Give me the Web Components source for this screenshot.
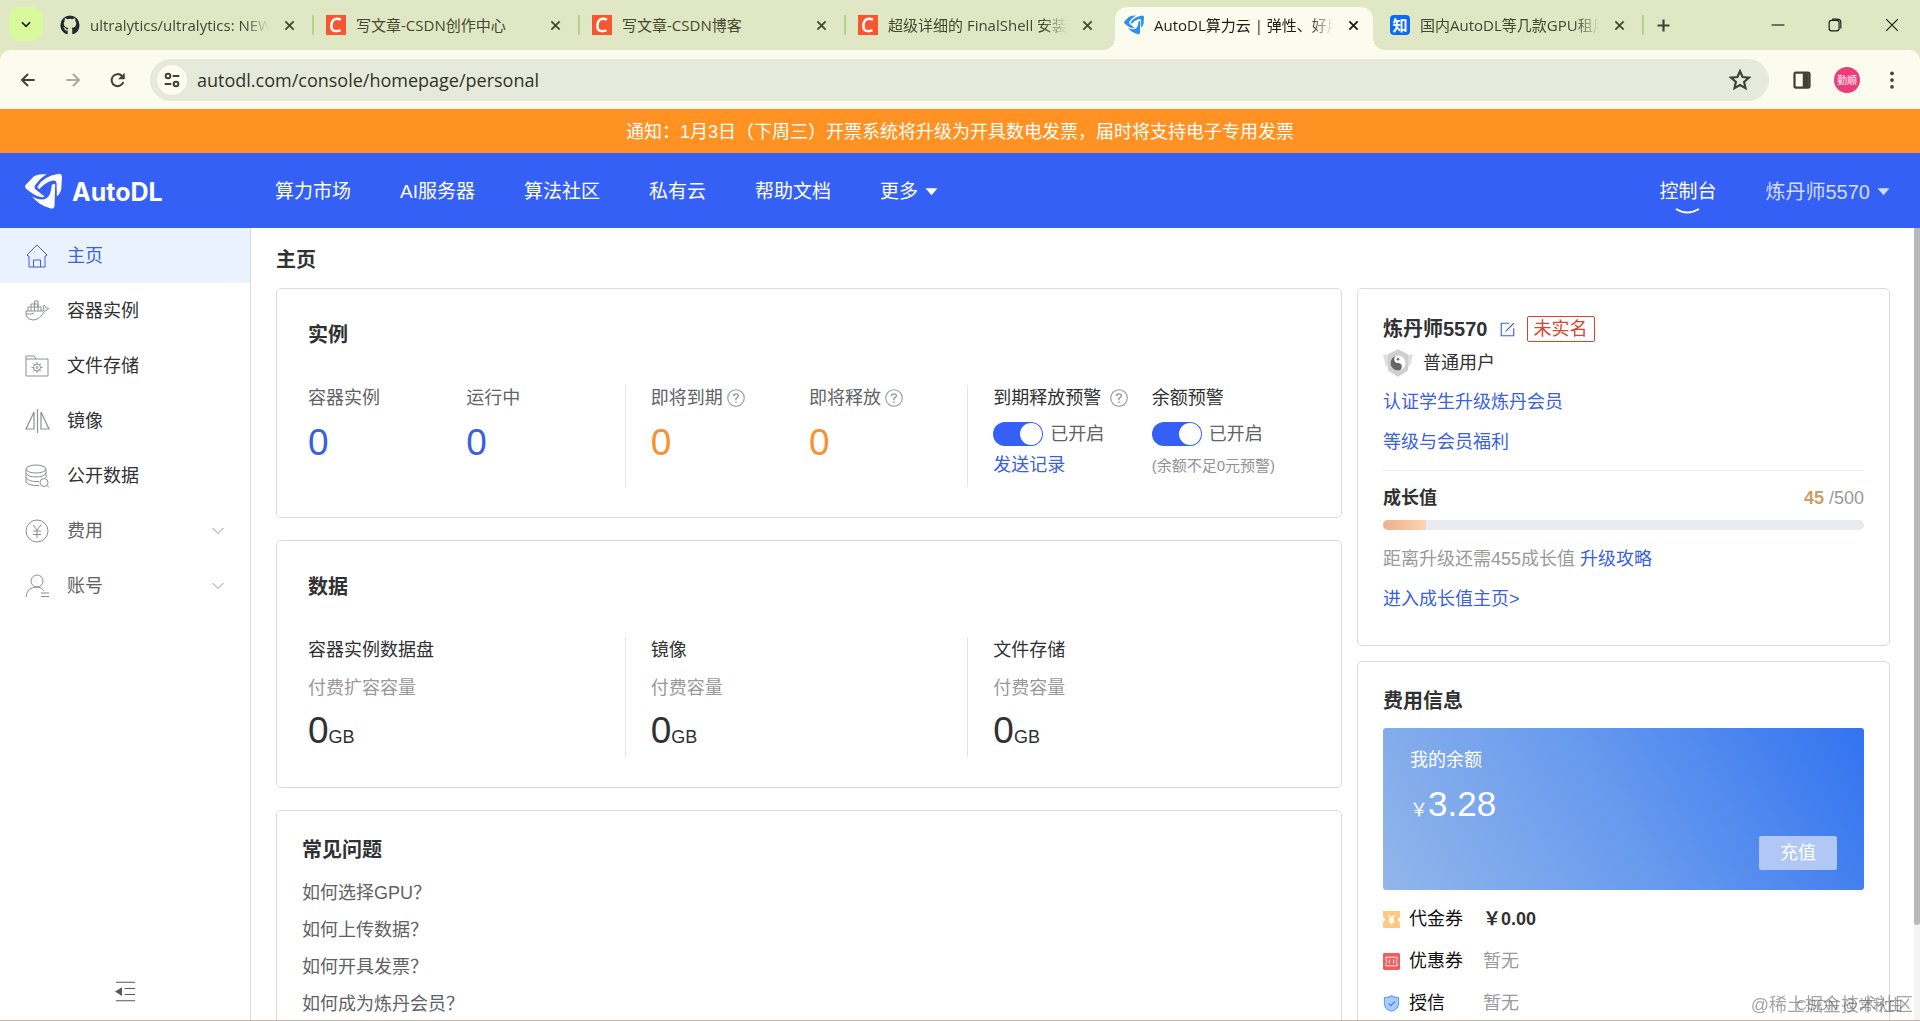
<!DOCTYPE html>
<html lang="zh-CN">
<head>
<meta charset="utf-8">
<title>AutoDL算力云 | 弹性、好用</title>
<style>
  body {
    margin: 0;
    font-family: "Liberation Sans", "Noto Sans CJK SC", sans-serif;
    font-size: 18px;
    line-height: 24px;
    color: #303133;
    background: #fff;
  }
</style>
</head>
<body>
<console-app></console-app>

<script>
const ICONS = {
  chevron: `<path d="M5 9l7 7 7-7" fill="none" stroke="currentColor" stroke-width="3"/>`,
  thinChevron: `<path d="M1 6l11 11 11-11" fill="none" stroke="currentColor" stroke-width="2"/>`,
  caret: `<path d="M1 6h22L12 19z" fill="currentColor"/>`,
  close: `<path d="M3 3l18 18M21 3L3 21" fill="none" stroke="currentColor" stroke-width="4"/>`,
  thinClose: `<path d="M2 2l20 20M22 2L2 22" fill="none" stroke="currentColor" stroke-width="2"/>`,
  plus: `<path d="M12 1v22M1 12h22" fill="none" stroke="currentColor" stroke-width="4"/>`,
  minus: `<path d="M1 12h22" fill="none" stroke="currentColor" stroke-width="2"/>`,
  restore: `<g fill="none" stroke="currentColor" stroke-width="2"><rect x="2" y="4" width="17" height="18" rx="4"/><path d="M7 2h9q6 0 6 6v10"/></g>`,
  back: `<path d="M22 12H4M12 3l-9 9 9 9" fill="none" stroke="currentColor" stroke-width="3"/>`,
  forward: `<path d="M2 12h18M12 3l9 9-9 9" fill="none" stroke="currentColor" stroke-width="3"/>`,
  reload: `<path d="M20 15a9 9 0 1 1-2-9l3 3" fill="none" stroke="currentColor" stroke-width="3"/><path d="M22 1v10H12z" fill="currentColor"/>`,
  tune: `<g fill="none" stroke="currentColor" stroke-width="3"><circle cx="6" cy="6" r="3.5"/><path d="M13 6h10M1 18h10"/><circle cx="18" cy="18" r="3.5"/></g>`,
  star: `<path d="M12 2.500l2.800 6.300 6.900.7-5.200 4.600 1.500 6.800-6-3.500-6 3.500 1.500-6.800-5.200-4.600 6.900-.7z" fill="none" stroke="currentColor" stroke-width="2.400"/>`,
  panel: `<rect x="2" y="2" width="20" height="20" rx="2" fill="none" stroke="currentColor" stroke-width="3"/><path d="M13 2h8v20h-8z" fill="currentColor"/>`,
  dots: `<g fill="currentColor"><circle cx="12" cy="3" r="2.500"/><circle cx="12" cy="12" r="2.500"/><circle cx="12" cy="21" r="2.500"/></g>`,
  github: `<path fill="#24292f" d="M12 .5A11.500 11.500 0 0 0 .5 12.200c0 5 3.300 9.400 7.900 11 .6.100.8-.3.800-.6v-4c-2.800.6-3.500-1-3.800-1.900-.3-.7-1-1.600-1.600-1.900 1.800-.6 2.600.9 3 1.500.9 1.300 2 1.200 2.600.9.100-.7.400-1.200.7-1.500-2.800-.3-5.500-1.300-5.500-5.700 0-1.300.4-2.300 1.200-3.100-.1-.3-.5-1.500.1-3.100 0 0 1-.3 3.200 1.200a11 11 0 0 1 5.800 0c2.200-1.500 3.200-1.200 3.200-1.200.6 1.600.2 2.800.1 3.100.7.800 1.200 1.800 1.200 3.100 0 4.400-2.700 5.400-5.500 5.700.5.400.8 1.100.8 2.200v4.700c0 .3.200.7.800.6a11.700 11.700 0 0 0 7.900-11A11.500 11.500 0 0 0 12 .5z"/>`,
  csdn: `<path d="M0 0h24v24H0z" fill="#f9552f"/><path d="M18 5.500Q7.500 2 6.500 12T17.500 18.500" fill="none" stroke="#fff" stroke-width="3"/>`,
  blades: `<g transform="translate(0 .5) scale(.22)" fill="currentColor"><path d="M64 1Q40 1 26 8L3 32Q-3 38 4 45L24 60Q42 72 58 68L30 45Q25 38 32 31Q44 14 64 1z"/><path d="M100 0Q109 0 109 10L107 44Q104 60 94 66L93 27Q91 18 82 20Q58 26 42 46L36 39Q52 8 100 0z"/><path d="M21 67Q46 82 64 72Q76 64 79 33Q85 28 89 31L87 96Q85 106 74 102Q40 92 21 67z"/></g>`,
  home: `<path d="M2 11L12 1l10 10-1 1h-1v11H4V12H3zM8.500 23v-7h7v7" fill="none" stroke="currentColor"/>`,
  docker: `<g fill="none" stroke="currentColor"><path d="M1 12h17q1-1 .5-3-.8-2 .5-3 1.500 1 2 3 1.500-.3 2.500.5-1 2-4 2.500Q15 21 8 21 0 20 1 12zM3 12V8h13v4M6 12V5h7v7M9.500 12V2H13v6M1 15h5l3-1"/></g>`,
  folder: `<g fill="none" stroke="currentColor"><path d="M1 22V2h8l2 3h12v17zM1 5h10"/><circle cx="12" cy="13.500" r="3.500"/><circle cx="12" cy="13.500" r="1"/><path d="M12 8v2M12 17v2M6.500 13.500h2M15.500 13.500h2M8 9.500l1.500 1.500M14.500 16l1.500 1.500M16 9.500L14.500 11M9.500 16L8 17.500"/></g>`,
  mirror: `<path d="M12.500 0v24M9 3v17H1zM16 3v17h8z" fill="none" stroke="currentColor" stroke-width="1.200"/>`,
  database: `<g fill="none" stroke="currentColor"><ellipse cx="11" cy="5" rx="10" ry="4"/><path d="M1 5v13q3 4 13 3.500M21 5v9M1 9q2 4 10 4t10-4M1 13.500q2 4 10 4h3"/><circle cx="19" cy="18.500" r="4"/><path d="M22 21.500l2 2"/></g>`,
  yen: `<g fill="none" stroke="currentColor"><circle cx="12" cy="12" r="11"/><path d="M8 6l4 5 4-5M12 11v8M8 12h8M8 15.500h8"/></g>`,
  account: `<g fill="none" stroke="currentColor"><circle cx="12" cy="7" r="6"/><path d="M1 23Q2 13 12 13q5 0 7 4M16 19h8M16 22.500h8"/></g>`,
  collapse: `<path d="M1 1.500h22M11 8.500h12M11 15.500h12M1 22.500h22" fill="none" stroke="currentColor" stroke-width="1.200"/><path d="M0 12l8-5v10z" fill="currentColor"/>`,
  help: `<g fill="none" stroke="currentColor"><circle cx="12" cy="12" r="11" stroke-width="1.400"/><path d="M8.800 9.500Q9 6.500 12 6.500t3.200 2.800Q15.200 11 12 12.500V15M12 16.500v2" stroke-width="1.800"/></g>`,
  edit: `<path d="M15 2H2v20h20V10M9 15L22 2" fill="none" stroke="currentColor" stroke-width="1.800"/>`,
  badge: `<path d="M0 5l7 1v13L2 13zM24 5l-7 1v13l5-6z" fill="#dedede"/><path d="M12 1l8 4v13l-8 5-8-5V5z" fill="#cfcfcf"/><circle cx="12" cy="12" r="6" fill="#fff"/><path d="M12 6a6 6 0 0 0 0 12 3 3 0 0 0 0-6 3 3 0 0 1 0-6z" fill="#666"/><circle cx="12" cy="9" r="1" fill="#666"/>`,
  voucher: `<path d="M0 0h24v9a3 3 0 0 0 0 6v9H0v-9a3 3 0 0 0 0-6z" fill="#ffc97f"/><path d="M8 6l4 5 4-5M12 11v8M8 12h8M8 15h8" fill="none" stroke="#fff" stroke-width="2.200"/>`,
  coupon: `<rect width="24" height="24" rx="2" fill="#f65c5e"/><path d="M4 6h16v3q-3 3 0 6v3H4v-3q3-3 0-6zM9 9v6M15 9v6" fill="none" stroke="#fff" stroke-width="1.300"/>`,
  shield: `<path d="M12 1q5 3 10 3v9q-1 7-10 10Q3 20 2 13V4q5 0 10-3z" fill="#a9cdfb" stroke="#5b9bf3" stroke-width="1.500"/><path d="M8 12l3 3 6-6" fill="none" stroke="#3d7ff0" stroke-width="1.500"/>`,
};

const LINK_STYLE = `
  a { color: #3a5fe0; text-decoration: none; }
  button { font: inherit; color: inherit; border: none; background: none; padding: 0; }
`;

// Shared base: renders the markup returned by render() into an open root
class BaseElement extends HTMLElement {
  connectedCallback() {
    if (this.shadowRoot) return;
    this.attachShadow({ mode: "open" });
    this.shadowRoot.innerHTML = `<style>${LINK_STYLE}</style>` + this.render();
  }
  attr(name) {
    return this.getAttribute(name) || "";
  }
}

class UiIcon extends BaseElement {
  render() {
    return /* HTML */ `
      <style>
        :host {
          display: block;
          flex: none;
          width: var(--icon-size, 20px);
          height: var(--icon-size, 20px);
        }
        svg { display: block; width: 100%; height: 100%; overflow: visible; }
      </style>
      <svg viewBox="0 0 24 24" aria-hidden="true">${ICONS[this.attr("name")]}</svg>
    `;
  }
}

class BrowserTab extends BaseElement {
  render() {
    return /* HTML */ `
      <style>
        :host {
          display: block;
          flex: 0 1 266px;
          min-width: 0;
          box-sizing: border-box;
          padding: 0 4px;
          color: #43492f;
        }
        .tab {
          display: flex;
          align-items: center;
          height: 36px;
          padding: 0 9px 7px;
          position: relative;
        }
        :host([active]) { color: #1b1c15; }
        :host([active]) .tab { background: #fbfbee; border-radius: 12px 12px 0 0; }
        :host([active]) .tab::before,
        :host([active]) .tab::after {
          content: "";
          position: absolute;
          bottom: 0;
          width: 12px;
          height: 12px;
        }
        :host([active]) .tab::before {
          right: 100%;
          background: radial-gradient(circle at 0 0, transparent 12px, #fbfbee 12px);
        }
        :host([active]) .tab::after {
          left: 100%;
          background: radial-gradient(circle at 100% 0, transparent 12px, #fbfbee 12px);
        }
        .title {
          flex: 1;
          min-width: 0;
          margin: 0 15px 0 10px;
          overflow: hidden;
          white-space: nowrap;
        }
        :host([fade]) .title { -webkit-mask-image: linear-gradient(to left, transparent, #000 24px); }
        button { --icon-size: 11px; margin-right: 5px; }
        .line { position: absolute; right: -5px; top: 8px; width: 2px; height: 20px; background: #b9d48a; }
        :host(:not([line])) .line { display: none; }
        ui-icon[name="blades"] { color: #2a8ff0; }
        .zhi {
          width: 20px;
          height: 20px;
          border-radius: 4px;
          background: #0a6cf5;
          color: #fff;
          font-weight: bold;
          line-height: 20px;
          text-align: center;
        }
      </style>
      <div class="tab">
        ${this.attr("icon") === "zhihu"
          ? `<span class="zhi">知</span>`
          : `<ui-icon name="${this.attr("icon")}"></ui-icon>`}
        <span class="title"><slot></slot></span>
        <button aria-label="关闭"><ui-icon name="close"></ui-icon></button>
        <span class="line"></span>
      </div>
    `;
  }
}

class BrowserBar extends BaseElement {
  render() {
    return /* HTML */ `
      <style>
        :host {
          display: block;
          background: #dfe7c5;
          color: #3f4432;
          font-family: "Open Sans", "Noto Sans CJK SC", sans-serif;
          font-size: 15px;
        }
        .strip { display: flex; height: 43px; padding: 7px 21px 0 9px; }
        .search {
          --icon-size: 14px;
          display: grid;
          place-items: center;
          width: 34px;
          height: 34px;
          margin-right: 4px;
          border-radius: 10px;
          background: #d9f99d;
          color: #1b1c15;
        }
        .add { --icon-size: 13px; height: 36px; margin-left: 14px; }
        .window {
          --icon-size: 14px;
          display: flex;
          align-items: center;
          gap: 43px;
          height: 36px;
          margin-left: auto;
          color: #1b1c15;
        }
        .toolbar {
          display: flex;
          align-items: center;
          height: 59px;
          padding: 0 19px 0 20px;
          background: #fbfbee;
          border-radius: 10px 10px 0 0;
        }
        .history { display: flex; gap: 29px; --icon-size: 16px; }
        .history button:nth-child(2) { color: #a9ab9d; }
        .address {
          display: flex;
          flex: 1;
          align-items: center;
          height: 42px;
          box-sizing: border-box;
          margin: 0 24px;
          padding: 0 18px 0 7px;
          border-radius: 21px;
          background: #e6eada;
        }
        .site {
          --icon-size: 16px;
          display: grid;
          place-items: center;
          width: 30px;
          height: 30px;
          border-radius: 50%;
          background: #fbfbee;
        }
        input {
          flex: 1;
          min-width: 0;
          margin-left: 10px;
          padding: 0;
          border: none;
          outline: none;
          background: none;
          font: inherit;
          font-size: 18px;
          color: #30342a;
        }
        .star { --icon-size: 22px; }
        .tools { display: flex; align-items: center; gap: 23px; }
        .tools ui-icon { --icon-size: 18px; }
        .avatar {
          width: 26px;
          height: 26px;
          border-radius: 50%;
          background: #ec3d79;
          color: #fff;
          font-size: 10px;
          line-height: 26px;
          text-align: center;
        }
      </style>
      <div class="strip">
        <button class="search" aria-label="搜索标签页"><ui-icon name="chevron"></ui-icon></button>
        <browser-tab icon="github" fade line>ultralytics/ultralytics: NEW</browser-tab>
        <browser-tab icon="csdn" line>写文章-CSDN创作中心</browser-tab>
        <browser-tab icon="csdn" line>写文章-CSDN博客</browser-tab>
        <browser-tab icon="csdn" fade>超级详细的 FinalShell 安装</browser-tab>
        <browser-tab icon="blades" fade active>AutoDL算力云 | 弹性、好用</browser-tab>
        <browser-tab icon="zhihu" fade line>国内AutoDL等几款GPU租用</browser-tab>
        <button class="add" aria-label="新标签页"><ui-icon name="plus"></ui-icon></button>
        <div class="window">
          <button aria-label="最小化"><ui-icon name="minus"></ui-icon></button>
          <button aria-label="还原"><ui-icon name="restore"></ui-icon></button>
          <button aria-label="关闭"><ui-icon name="thinClose"></ui-icon></button>
        </div>
      </div>
      <div class="toolbar">
        <div class="history">
          <button aria-label="后退"><ui-icon name="back"></ui-icon></button>
          <button aria-label="前进"><ui-icon name="forward"></ui-icon></button>
          <button aria-label="刷新"><ui-icon name="reload"></ui-icon></button>
        </div>
        <div class="address">
          <span class="site"><ui-icon name="tune"></ui-icon></span>
          <input type="text" aria-label="地址" value="autodl.com/console/homepage/personal">
          <button class="star" aria-label="收藏"><ui-icon name="star"></ui-icon></button>
        </div>
        <div class="tools">
          <button aria-label="侧边栏"><ui-icon name="panel"></ui-icon></button>
          <button class="avatar">勤顺</button>
          <button aria-label="菜单"><ui-icon name="dots"></ui-icon></button>
        </div>
      </div>
    `;
  }
}

class NoticeBar extends BaseElement {
  render() {
    return /* HTML */ `
      <style>
        :host {
          display: block;
          padding: 11px 10px 9px;
          background: #ff9222;
          color: #fff;
          text-align: center;
        }
      </style>
      <slot></slot>
    `;
  }
}

class SiteHeader extends BaseElement {
  render() {
    return /* HTML */ `
      <style>
        :host {
          display: flex;
          align-items: center;
          height: 75px;
          box-sizing: border-box;
          padding: 2px 30px 0 25px;
          background: #3560f5;
          color: #fff;
          font-size: 19px;
        }
        a { display: flex; align-items: center; gap: 7px; color: #fff; }
        .logo {
          --icon-size: 37px;
          width: 250px;
          gap: 10px;
          font-family: Inter, sans-serif;
          font-size: 25px;
          font-weight: bold;
        }
        nav { display: flex; flex: 1; gap: 49px; }
        nav ui-icon, .user ui-icon { --icon-size: 13px; }
        .console { position: relative; }
        .console svg { position: absolute; left: 16px; top: 28px; }
        .user { margin-left: 49px; font-size: 20px; color: #d3ddfd; }
      </style>
      <a class="logo" href="#"><ui-icon name="blades"></ui-icon>AutoDL</a>
      <nav>
        <a href="#">算力市场</a>
        <a href="#">AI服务器</a>
        <a href="#">算法社区</a>
        <a href="#">私有云</a>
        <a href="#">帮助文档</a>
        <a href="#">更多<ui-icon name="caret"></ui-icon></a>
      </nav>
      <a class="console" href="#">控制台
        <svg width="25" height="6" viewBox="0 0 25 6"><path d="M1 1q11 7 23 0" fill="none" stroke="#fff" stroke-width="2"/></svg>
      </a>
      <a class="user" href="#">炼丹师5570<ui-icon name="caret"></ui-icon></a>
    `;
  }
}

class NavItem extends BaseElement {
  render() {
    return /* HTML */ `
      <style>
        :host { display: block; color: #303133; }
        :host([muted]) { color: #606266; }
        a {
          display: flex;
          align-items: center;
          height: 55px;
          padding: 0 26px 0 25px;
          color: inherit;
        }
        .icon { --icon-size: 24px; margin-right: 18px; color: #8d8f93; }
        .arrow { --icon-size: 12px; margin-left: auto; color: #909399; }
        :host([active]) a { background: #ebf2ff; }
        :host([active]) a, :host([active]) .icon { color: #3a5fe0; }
      </style>
      <a href="#">
        <ui-icon class="icon" name="${this.attr("icon")}"></ui-icon>
        <slot></slot>
        ${this.hasAttribute("expandable") ? `<ui-icon class="arrow" name="thinChevron"></ui-icon>` : ""}
      </a>
    `;
  }
}

class SideNav extends BaseElement {
  render() {
    return /* HTML */ `
      <style>
        :host {
          display: flex;
          flex: 0 0 250px;
          flex-direction: column;
          border-right: 1px solid #d6d8dd;
        }
        button { --icon-size: 21px; margin: auto auto 18px; color: #55575c; }
      </style>
      <nav-item icon="home" active>主页</nav-item>
      <nav-item icon="docker">容器实例</nav-item>
      <nav-item icon="folder">文件存储</nav-item>
      <nav-item icon="mirror">镜像</nav-item>
      <nav-item icon="database">公开数据</nav-item>
      <nav-item icon="yen" muted expandable>费用</nav-item>
      <nav-item icon="account" muted expandable>账号</nav-item>
      <button aria-label="收起菜单"><ui-icon name="collapse"></ui-icon></button>
    `;
  }
}

class PanelCard extends BaseElement {
  render() {
    return /* HTML */ `
      <style>
        :host {
          display: block;
          padding: 26px 25px;
          border: 1px solid #d9dbe0;
          border-radius: 5px;
        }
        :host([wide]) { padding: 33px 31px 30px; }
        h2 { margin: 0; font-size: 20px; line-height: 26px; }
      </style>
      ${this.attr("heading") ? `<h2>${this.attr("heading")}</h2>` : ""}
      <slot></slot>
    `;
  }
}

// Row of equal groups with a rule between them
class StatRow extends BaseElement {
  render() {
    return /* HTML */ `
      <style>
        :host { display: flex; min-height: 102px; margin-top: 37px; }
        :host([tall]) { min-height: 115px; }
        ::slotted(div) {
          flex: 1 1 0;
          display: grid;
          grid-auto-columns: 1fr;
          grid-auto-flow: column;
          align-content: start;
        }
        ::slotted(div:not(:first-child)) { border-left: 1px solid #e3e5e9; padding-left: 25px; }
      </style>
      <slot></slot>
    `;
  }
}

class StatItem extends BaseElement {
  render() {
    return /* HTML */ `
      <style>
        :host { display: block; min-width: 0; }
        .label { display: flex; align-items: center; gap: 4px; line-height: 26px; color: #606266; white-space: nowrap; }
        :host([dark]) .label { color: #303133; }
        :host([spaced]) .label { gap: 9px; }
        .label ui-icon { --icon-size: 18px; color: #909399; }
        .note { margin-top: 12px; line-height: 26px; color: #999; }
        .value { margin-top: 12px; font-size: 37px; line-height: 40px; color: var(--value-color, #303133); }
        .note + .value { margin-top: 10px; }
        small { font-size: 18px; }
      </style>
      <div class="label">
        ${this.attr("label")}
        ${this.hasAttribute("help") ? `<ui-icon name="help"></ui-icon>` : ""}
      </div>
      ${this.attr("note") ? `<div class="note">${this.attr("note")}</div>` : ""}
      ${this.attr("value") ? `<div class="value">${this.attr("value")}<small>${this.attr("unit")}</small></div>` : ""}
      <slot></slot>
    `;
  }
}

class ToggleSwitch extends BaseElement {
  render() {
    return /* HTML */ `
      <style>
        :host { display: block; margin: 11px 0 7px; }
        label { display: flex; align-items: center; gap: 7px; height: 24px; color: #606266; }
        input {
          appearance: none;
          width: 50px;
          height: 24px;
          margin: 0;
          padding: 1px;
          border-radius: 12px;
          background: #c0c4cc;
        }
        input::before {
          content: "";
          display: block;
          width: 22px;
          height: 22px;
          border-radius: 50%;
          background: #fff;
        }
        input:checked { background: #3560f5; }
        input:checked::before { margin-left: auto; }
      </style>
      <label><input type="checkbox" role="switch" checked><slot></slot></label>
    `;
  }
}

class UserCard extends BaseElement {
  render() {
    return /* HTML */ `
      <style>
        :host { display: block; }
        .name { display: flex; align-items: center; height: 28px; }
        h2 { margin: 0; font-size: 20px; }
        .edit { --icon-size: 15px; margin: 0 12px; color: #3a5fe0; }
        .tag {
          padding: 0 6px;
          border: 1px solid #d9442f;
          border-radius: 2px;
          color: #d9442f;
        }
        .level { display: flex; align-items: center; gap: 10px; height: 24px; margin: 8px 0 7px; }
        .level ui-icon { --icon-size: 30px; }
        p { margin: 0; line-height: 40px; color: #999; }
        hr { margin: 8px 0 15px; border: none; border-top: 1px solid #ebedf0; }
        .growth { display: flex; justify-content: space-between; line-height: 24px; color: #999; }
        h3 { margin: 0; font-size: 18px; color: #303133; }
        b { color: #c9a063; }
        .bar { height: 10px; margin: 10px 0 9px; border-radius: 5px; background: #e8ebf0; overflow: hidden; }
        .bar div { width: 9%; height: 100%; background: linear-gradient(to right, #eeb08e, #fbd4b1); }
      </style>
      <div class="name">
        <h2>炼丹师5570</h2>
        <button class="edit" aria-label="编辑"><ui-icon name="edit"></ui-icon></button>
        <span class="tag">未实名</span>
      </div>
      <div class="level"><ui-icon name="badge"></ui-icon>普通用户</div>
      <p><a href="#">认证学生升级炼丹会员</a></p>
      <p><a href="#">等级与会员福利</a></p>
      <hr>
      <div class="growth"><h3>成长值</h3><span><b>45</b> /500</span></div>
      <div class="bar"><div></div></div>
      <p>距离升级还需455成长值 <a href="#">升级攻略</a></p>
      <p><a href="#">进入成长值主页&gt;</a></p>
    `;
  }
}

class FeeCard extends BaseElement {
  render() {
    return /* HTML */ `
      <style>
        :host { display: block; margin-top: 14px; }
        .balance {
          display: flex;
          flex-direction: column;
          gap: 12px;
          padding: 20px 27px;
          border-radius: 3px;
          background: linear-gradient(60deg, #92b6ea, #6699ee 50%, #3273f0);
          color: #fff;
        }
        .amount { line-height: 40px; font-size: 35px; }
        small { font-size: 18px; line-height: 18px; }
        .balance button {
          align-self: flex-end;
          width: 78px;
          height: 34px;
          border-radius: 2px;
          background: #b1c7f5;
        }
        dl {
          display: grid;
          grid-template-columns: 100px 1fr;
          grid-auto-rows: 42px;
          align-items: center;
          margin: 8px 0 0;
        }
        dt { display: flex; align-items: center; gap: 9px; color: #111; --icon-size: 17px; }
        dd { margin: 0; color: #999; }
        b { color: #303133; }
      </style>
      <div class="balance">
        <span>我的余额</span>
        <span class="amount"><small>￥</small>3.28</span>
        <button>充值</button>
      </div>
      <dl>
        <dt><ui-icon name="voucher"></ui-icon>代金券</dt><dd><b>￥0.00</b></dd>
        <dt><ui-icon name="coupon"></ui-icon>优惠券</dt><dd>暂无</dd>
        <dt><ui-icon name="shield"></ui-icon>授信</dt><dd>暂无</dd>
      </dl>
    `;
  }
}

class FaqList extends BaseElement {
  render() {
    return /* HTML */ `
      <style>
        :host { display: block; margin-top: 12px; }
        ::slotted(a) { display: block; line-height: 37px; }
      </style>
      <slot></slot>
    `;
  }
}

class PageWatermark extends BaseElement {
  render() {
    return /* HTML */ `
      <style>
        :host {
          position: fixed;
          right: 7px;
          bottom: 4px;
          display: grid;
          justify-items: end;
          color: rgba(90, 90, 90, 0.55);
          pointer-events: none;
        }
        span { grid-area: 1 / 1; }
        .second { margin-right: 10px; font-size: 15px; }
      </style>
      <span>@稀土掘金技术社区</span>
      <span class="second">CSDN @常秋由</span>
    `;
  }
}

class ConsoleApp extends BaseElement {
  render() {
    return /* HTML */ `
      <style>
        :host {
          display: flex;
          flex-direction: column;
          height: 100vh;
          box-sizing: border-box;
          overflow: hidden;
          border-bottom: 1px solid #bfb7a6;
        }
        .body { display: flex; flex: 1; min-height: 0; }
        main { flex: 1; min-width: 0; overflow: hidden; padding: 20px 24px 0 25px; }
        h1 { margin: 0 0 16px; font-size: 20px; line-height: 24px; }
        .columns { display: grid; grid-template-columns: 2fr 1fr; gap: 15px; align-items: start; }
        .left { display: grid; gap: 22px; }
        .right { display: grid; gap: 15px; }
        .blue { --value-color: #3a5fe0; }
        .orange { --value-color: #f7922f; }
        .hint { font-size: 15px; color: #909399; white-space: nowrap; }
        faq-list a { color: #606266; }
        .scroll { width: 6px; background: #f4f4f4; }
        .scroll div { height: 88%; background: #b9b9b9; border-radius: 0 0 3px 3px; }
      </style>
      <browser-bar></browser-bar>
      <notice-bar>通知：1月3日（下周三）开票系统将升级为开具数电发票，届时将支持电子专用发票</notice-bar>
      <site-header></site-header>
      <div class="body">
        <side-nav></side-nav>
        <main>
          <h1>主页</h1>
          <div class="columns">
            <div class="left">
              <panel-card wide heading="实例">
                <stat-row>
                  <div class="blue">
                    <stat-item label="容器实例" value="0"></stat-item>
                    <stat-item label="运行中" value="0"></stat-item>
                  </div>
                  <div class="orange">
                    <stat-item label="即将到期" value="0" help></stat-item>
                    <stat-item label="即将释放" value="0" help></stat-item>
                  </div>
                  <div>
                    <stat-item label="到期释放预警" dark spaced help>
                      <toggle-switch>已开启</toggle-switch>
                      <a href="#">发送记录</a>
                    </stat-item>
                    <stat-item label="余额预警" dark>
                      <toggle-switch>已开启</toggle-switch>
                      <span class="hint">(余额不足0元预警)</span>
                    </stat-item>
                  </div>
                </stat-row>
              </panel-card>
              <panel-card wide heading="数据">
                <stat-row tall>
                  <div><stat-item dark label="容器实例数据盘" note="付费扩容容量" value="0" unit="GB"></stat-item></div>
                  <div><stat-item dark label="镜像" note="付费容量" value="0" unit="GB"></stat-item></div>
                  <div><stat-item dark label="文件存储" note="付费容量" value="0" unit="GB"></stat-item></div>
                </stat-row>
              </panel-card>
              <panel-card heading="常见问题">
                <faq-list>
                  <a href="#">如何选择GPU？</a>
                  <a href="#">如何上传数据？</a>
                  <a href="#">如何开具发票？</a>
                  <a href="#">如何成为炼丹会员？</a>
                </faq-list>
              </panel-card>
            </div>
            <div class="right">
              <panel-card><user-card></user-card></panel-card>
              <panel-card heading="费用信息"><fee-card></fee-card></panel-card>
            </div>
          </div>
        </main>
        <div class="scroll"><div></div></div>
      </div>
      <page-watermark></page-watermark>
    `;
  }
}

customElements.define("ui-icon", UiIcon);
customElements.define("browser-tab", BrowserTab);
customElements.define("browser-bar", BrowserBar);
customElements.define("notice-bar", NoticeBar);
customElements.define("site-header", SiteHeader);
customElements.define("nav-item", NavItem);
customElements.define("side-nav", SideNav);
customElements.define("panel-card", PanelCard);
customElements.define("stat-row", StatRow);
customElements.define("stat-item", StatItem);
customElements.define("toggle-switch", ToggleSwitch);
customElements.define("user-card", UserCard);
customElements.define("fee-card", FeeCard);
customElements.define("faq-list", FaqList);
customElements.define("page-watermark", PageWatermark);
customElements.define("console-app", ConsoleApp);
</script>
</body>
</html>
